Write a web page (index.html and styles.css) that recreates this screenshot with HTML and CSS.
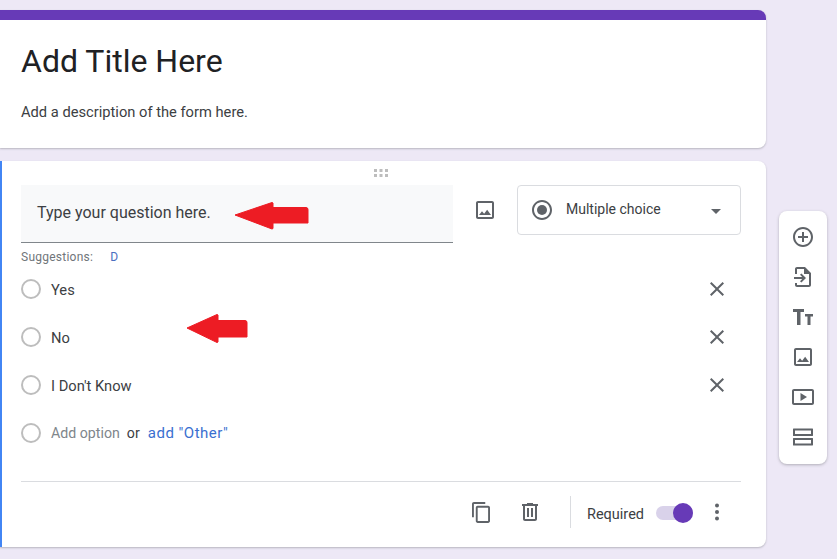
FILE: index.html
```html
<!DOCTYPE html>
<html lang="en">
<head>
<meta charset="utf-8">
<title>Form</title>
<link rel="stylesheet" href="styles.css">
</head>
<body>
<div class="page">
  <main class="column">
    <section class="card title-card">
      <h1 class="form-title">Add Title Here</h1>
      <p class="form-desc">Add a description of the form here.</p>
    </section>
    <section class="card question-card">
      <div class="drag">
        <svg width="16" height="10" viewBox="0 0 16 10" class="drag-icon"><g fill="#bdbdbd"><rect x="1" y="1" width="3" height="3"/><rect x="6.500" y="1" width="3" height="3"/><rect x="12" y="1" width="3" height="3"/><rect x="1" y="6" width="3" height="3"/><rect x="6.500" y="6" width="3" height="3"/><rect x="12" y="6" width="3" height="3"/></g></svg>
      </div>
      <div class="q-head">
        <div class="q-input">Type your question here.</div>
        <button class="q-image">
          <svg width="24" height="24" viewBox="0 0 24 24"><path fill="#5f6368" d="M19 5v14H5V5h14m0-2H5c-1.100 0-2 .9-2 2v14c0 1.100.9 2 2 2h14c1.100 0 2-.9 2-2V5c0-1.100-.9-2-2-2zm-4.860 8.860l-3 3.870L9 13.140 6 17h12l-3.860-5.140z"/></svg>
        </button>
        <div class="q-type">
          <svg width="24" height="24" viewBox="0 0 24 24"><path fill="#5f6368" d="M12 2C6.480 2 2 6.480 2 12s4.480 10 10 10 10-4.480 10-10S17.520 2 12 2zm0 18c-4.420 0-8-3.580-8-8s3.580-8 8-8 8 3.580 8 8-3.580 8-8 8z"/><circle cx="12" cy="12" r="5" fill="#5f6368"/></svg>
          <span class="q-type-label">Multiple choice</span>
          <span class="caret"></span>
        </div>
      </div>
      <div class="suggest"><span>Suggestions:</span><span class="suggest-d">D</span></div>
      <ul class="options">
        <li class="option"><span class="radio"></span><span class="opt-text">Yes</span>
          <svg class="x" width="24" height="24" viewBox="0 0 24 24"><path fill="#5f6368" d="M19 6.410L17.590 5 12 10.590 6.410 5 5 6.410 10.590 12 5 17.590 6.410 19 12 13.410 17.590 19 19 17.590 13.410 12z"/></svg></li>
        <li class="option"><span class="radio"></span><span class="opt-text">No</span>
          <svg class="x" width="24" height="24" viewBox="0 0 24 24"><path fill="#5f6368" d="M19 6.410L17.590 5 12 10.590 6.410 5 5 6.410 10.590 12 5 17.590 6.410 19 12 13.410 17.590 19 19 17.590 13.410 12z"/></svg></li>
        <li class="option"><span class="radio"></span><span class="opt-text">I Don't Know</span>
          <svg class="x" width="24" height="24" viewBox="0 0 24 24"><path fill="#5f6368" d="M19 6.410L17.590 5 12 10.590 6.410 5 5 6.410 10.590 12 5 17.590 6.410 19 12 13.410 17.590 19 19 17.590 13.410 12z"/></svg></li>
        <li class="option"><span class="radio"></span><span class="opt-add">Add option</span><span class="opt-or">or</span><span class="opt-other">add "Other"</span></li>
      </ul>
      <footer class="q-foot">
        <svg class="foot-icon foot-copy" width="18" height="21" viewBox="2 1 19 22"><path fill="#5f6368" d="M16 1H4c-1.100 0-2 .9-2 2v14h2V3h12V1zm-1 4H8c-1.100 0-2 .9-2 2v14c0 1.100.9 2 2 2h11c1.100 0 2-.9 2-2V7c0-1.100-.9-2-2-2zm-7 2h11v14H8V7z"/></svg>
        <svg class="foot-icon foot-trash" width="24" height="24" viewBox="0 0 24 24"><path fill="#5f6368" d="M15 4V3H9v1H4v2h1v13c0 1.100.9 2 2 2h10c1.100 0 2-.9 2-2V6h1V4h-5zm2 15H7V6h10v13zM9 8h2v9H9V8zm4 0h2v9h-2V8z"/></svg>
        <span class="foot-sep"></span>
        <span class="req">Required</span>
        <span class="toggle"><span class="knob"></span></span>
        <svg class="more" width="24" height="24" viewBox="0 0 24 24"><g fill="#5f6368"><circle cx="12" cy="5.500" r="2"/><circle cx="12" cy="12" r="2"/><circle cx="12" cy="18.500" r="2"/></g></svg>
      </footer>
      <svg class="arrow arrow-a" width="76" height="30" viewBox="0 0 76 30"><path fill="#ed1c24" stroke="#ed1c24" stroke-linejoin="round" d="M1 15L38 2.500l1 .5v4.500h33q2 0 2 2V23H39v5.500l-1 .5z"/></svg>
      <svg class="arrow arrow-b" width="62" height="30" viewBox="0 0 62 30"><path fill="#ed1c24" stroke="#ed1c24" stroke-linejoin="round" d="M1 15L31 1.500l1 .5v5.500h27q2 0 2 2V24H32v5l-1 .5z"/></svg>
    </section>
  </main>
  <aside class="toolbar">
    <svg width="24" height="24" viewBox="0 0 24 24"><path fill="#5f6368" d="M13 7h-2v4H7v2h4v4h2v-4h4v-2h-4V7zm-1-5C6.490 2 2 6.490 2 12s4.490 10 10 10 10-4.490 10-10S17.510 2 12 2zm0 18c-4.410 0-8-3.590-8-8s3.590-8 8-8 8 3.590 8 8-3.590 8-8 8z"/></svg>
    <svg width="24" height="24" viewBox="0 0 24 24"><path fill="#5f6368" d="M6 2h8l6 6v12c0 1.100-.9 2-2 2H6c-1.100 0-2-.9-2-2v-2h2v2h12V9h-5V4H6v5H4V4c0-1.100.9-2 2-2zM3 12h8.200L9 9.800l1.400-1.400L15 13l-4.600 4.600L9 16.200l2.200-2.200H3z"/></svg>
    <svg width="24" height="24" viewBox="0 0 24 24"><path fill="#5f6368" d="M2 4v3h4v13h3.500V7H13V4zM14 9v2.500h2.500V20h3v-8.500H22V9z"/></svg>
    <svg width="24" height="24" viewBox="0 0 24 24"><path fill="#5f6368" d="M19 5v14H5V5h14m0-2H5c-1.100 0-2 .9-2 2v14c0 1.100.9 2 2 2h14c1.100 0 2-.9 2-2V5c0-1.100-.9-2-2-2zm-4.860 8.860l-3 3.870L9 13.140 6 17h12l-3.860-5.140z"/></svg>
    <svg width="24" height="24" viewBox="0 0 24 24"><path fill="#5f6368" d="M21 4H3c-1.100 0-2 .9-2 2v12c0 1.100.9 2 2 2h18c1.100 0 2-.9 2-2V6c0-1.100-.9-2-2-2zm0 14H3V6h18v12zM9.500 8v8l6.500-4z"/></svg>
    <svg width="24" height="24" viewBox="0 0 24 24"><path fill="#5f6368" d="M2.500 3.500h19c.3 0 .5.200.5.500v6.500c0 .3-.2.500-.5.500h-19a.5.500 0 0 1-.5-.5V4c0-.3.2-.5.500-.5zM4 5.500V9h16V5.500zM2.500 13h19c.3 0 .5.200.5.500V20c0 .3-.2.500-.5.500h-19A.5.500 0 0 1 2 20v-6.500c0-.3.2-.5.500-.5zM4 15v3.500h16V15z"/></svg>
  </aside>
</div>
</body>
</html>
```
FILE: styles.css
```css
* { box-sizing: border-box; }
html, body { margin: 0; height: 100%; }
body {
  background: #ede8f6;
  font-family: Roboto, "Liberation Sans", sans-serif;
  color: #202124;
  overflow: hidden;
}
.page {
  display: flex;
  align-items: flex-start;
  padding-top: 10px;
}
.column {
  width: 766px;
  display: flex;
  flex-direction: column;
  gap: 13px;
  flex: none;
}
.card {
  background: #fff;
  border-radius: 0 8px 8px 0;
  box-shadow: 0 1px 2px rgba(60, 64, 67, .3);
  position: relative;
}
.title-card {
  height: 138px;
  border-top: 10px solid #673ab7;
  padding: 21px 21px 0;
}
.form-title {
  margin: 0;
  font-size: 32px;
  line-height: 40px;
  font-weight: 400;
}
.form-desc {
  margin: 21px 0 0;
  font-size: 14.700px;
  line-height: 20px;
  color: #3c4043;
}
.question-card {
  height: 386px;
  border-left: 2px solid #4285f4;
  padding: 0 25px 0 19px;
  display: flex;
  flex-direction: column;
}
.drag {
  height: 24px;
  display: flex;
  justify-content: center;
  padding-top: 7px;
}
.drag-icon { display: block; }
.q-head {
  display: flex;
  align-items: flex-start;
}
.q-input {
  width: 432px;
  height: 58px;
  background: #f8f9fa;
  border-bottom: 1px solid #80868b;
  padding: 17px 16px 0;
  font-size: 16px;
  line-height: 22px;
  color: #3c4043;
}
.q-image {
  width: 64px;
  height: 50px;
  border: 0;
  padding: 0;
  background: none;
  display: flex;
  align-items: center;
  justify-content: center;
}
.q-type {
  width: 224px;
  height: 50px;
  border: 1px solid #dadce0;
  border-radius: 4px;
  display: flex;
  align-items: center;
  padding: 0 19px 0 12px;
  font-size: 14px;
  color: #3c4043;
}
.q-type-label { margin: 0 0 2px 12px; flex: 1; }
.caret {
  width: 0;
  height: 0;
  border-left: 5px solid transparent;
  border-right: 5px solid transparent;
  border-top: 5px solid #5f6368;
  margin-top: 2px;
}
.suggest {
  height: 22px;
  display: flex;
  align-items: center;
  font-size: 12px;
  letter-spacing: .25px;
  color: #70757a;
  padding-top: 6px;
}
.suggest-d { color: #4a6fc0; margin-left: 17px; }
.options {
  list-style: none;
  margin: 0;
  padding: 0;
}
.option {
  height: 48px;
  display: flex;
  align-items: center;
  font-size: 14.700px;
}
.radio {
  width: 20px;
  height: 20px;
  border: 2px solid #bdbdbd;
  border-radius: 50%;
  flex: none;
  margin-right: 10px;
}
.opt-text { flex: 1; color: #3c4043; padding-top: 2px; }
.x { margin-right: 12px; }
.opt-add { color: #80868b; font-size: 14.200px; }
.opt-or { margin-left: 7px; font-size: 14.200px; color: #3c4043; }
.opt-other { margin-left: 8px; color: #3a6fd0; font-size: 15px; letter-spacing: .5px; }
.q-foot {
  height: 66px;
  margin-top: 24px;
  padding-bottom: 5px;
  border-top: 1px solid #dadce0;
  display: flex;
  align-items: center;
  justify-content: flex-end;
}
.foot-icon { flex: none; }
.foot-copy { margin-right: 28px; }
.foot-trash { margin-right: 28px; }
.foot-sep {
  width: 1px;
  height: 32px;
  background: #dadce0;
  margin-right: 16px;
}
.req { font-size: 14.500px; color: #3c4043; margin-top: 5px; }
.toggle {
  width: 37px;
  height: 14px;
  border-radius: 7px;
  background: #d9d2ea;
  margin: 2px 0 0 12px;
  position: relative;
}
.knob {
  position: absolute;
  right: 0;
  top: -3px;
  width: 20px;
  height: 20px;
  border-radius: 50%;
  background: #673ab7;
}
.more { margin: 0 12px 0 12px; flex: none; }
.arrow { position: absolute; }
.arrow-a { left: 232px; top: 39px; }
.arrow-b { left: 184px; top: 152px; }
.toolbar {
  width: 48px;
  height: 253px;
  margin: 201px 0 0 13px;
  background: #fff;
  border-radius: 8px;
  box-shadow: 0 1px 3px rgba(60, 64, 67, .35);
  display: flex;
  flex-direction: column;
  align-items: center;
  gap: 16px;
  padding-top: 14px;
  flex: none;
}
```
